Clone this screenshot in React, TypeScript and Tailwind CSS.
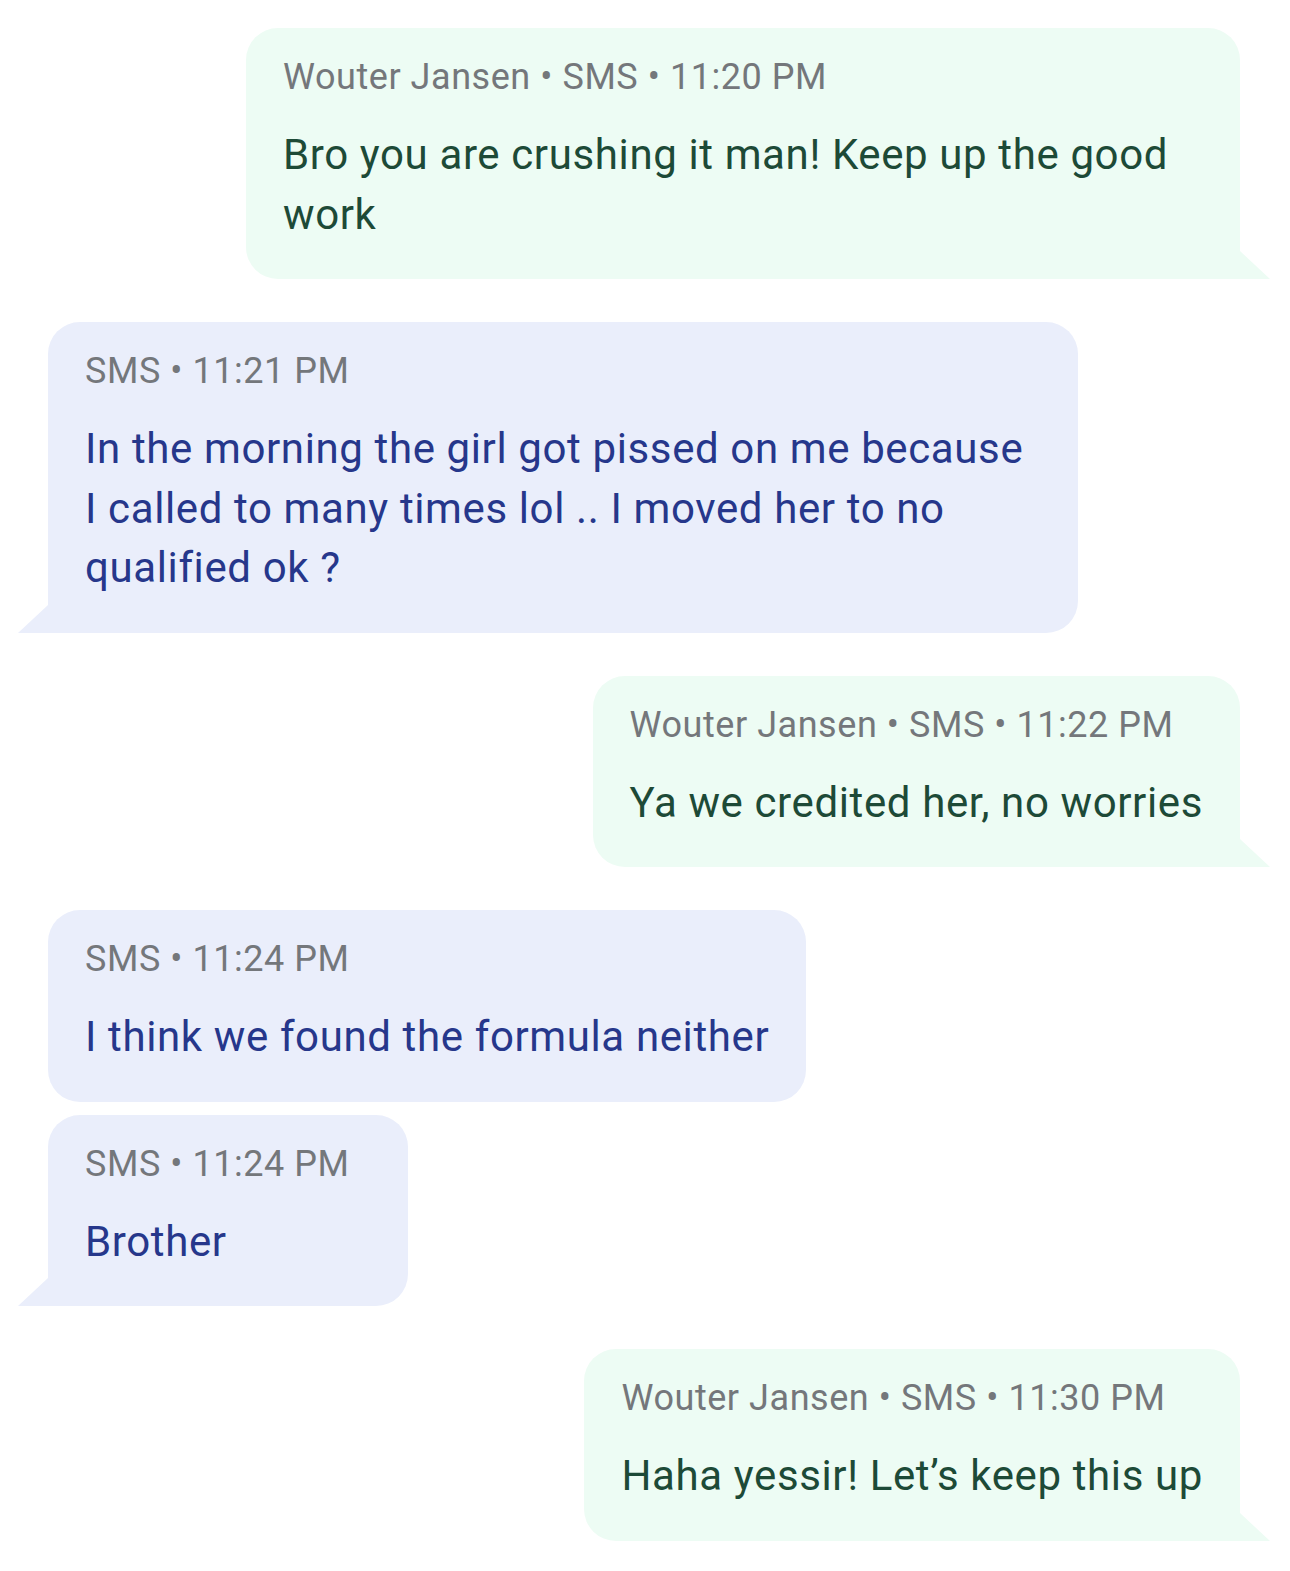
import React from 'react';

type Msg = {
    out: boolean;
    meta: string;
    text: string;
    maxW: string;
    tail: boolean;
    gap: string;
};

const messages: Msg[] = [
    { out: true, meta: 'Wouter Jansen • SMS • 11:20 PM', text: 'Bro you are crushing it man! Keep up the good work', maxW: 'max-w-[994px]', tail: true, gap: 'mt-0' },
    { out: false, meta: 'SMS • 11:21 PM', text: 'In the morning the girl got pissed on me because I called to many times lol .. I moved her to no qualified ok ?', maxW: 'max-w-[1030px]', tail: true, gap: 'mt-[43px]' },
    { out: true, meta: 'Wouter Jansen • SMS • 11:22 PM', text: 'Ya we credited her, no worries', maxW: 'max-w-[1030px]', tail: true, gap: 'mt-[43px]' },
    { out: false, meta: 'SMS • 11:24 PM', text: 'I think we found the formula neither', maxW: 'max-w-[1030px]', tail: false, gap: 'mt-[43px]' },
    { out: false, meta: 'SMS • 11:24 PM', text: 'Brother', maxW: 'max-w-[1030px]', tail: true, gap: 'mt-[13px]' },
    { out: true, meta: 'Wouter Jansen • SMS • 11:30 PM', text: 'Haha yessir! Let’s keep this up', maxW: 'max-w-[1030px]', tail: true, gap: 'mt-[43px]' },
];

const Bubble: React.FC<{ m: Msg }> = ({ m }) => {
    const corner = m.tail ? (m.out ? 'rounded-br-none' : 'rounded-bl-none') : '';
    return (
        <div className={`flex ${m.out ? 'justify-end' : 'justify-start'} ${m.gap}`}>
            <div className={`relative w-fit min-w-[360px] ${m.maxW} rounded-[32px] ${corner} ${m.out ? 'bg-[#edfcf4]' : 'bg-[#eaeefb]'} pl-[37px] pr-[37px] pt-[29px] pb-[35px]`}>
                <div className="text-[36px] leading-[40px] text-[#74777b] tracking-[0.55px] whitespace-nowrap">{m.meta}</div>
                <div className={`mt-[28px] text-[42px] leading-[59.5px] tracking-[0.62px] ${m.out ? 'text-[#1d4a37]' : 'text-[#26378b]'}`}>{m.text}</div>
                {m.tail && (
                    <svg
                        className={`absolute bottom-0 ${m.out ? 'right-[-30px]' : 'left-[-30px]'}`}
                        width="30"
                        height="28"
                        viewBox="0 0 30 28"
                    >
                        {m.out ? (
                            <polygon points="0,0 30,28 0,28" fill="#edfcf4" />
                        ) : (
                            <polygon points="30,0 0,28 30,28" fill="#eaeefb" />
                        )}
                    </svg>
                )}
            </div>
        </div>
    );
};

const App: React.FC = () => {
    return (
        <div className="min-h-screen w-full bg-white pt-[28px] pb-[35px] pl-[48px] pr-[50px]" style={{ fontFamily: 'Roboto, "Noto Sans", sans-serif' }}>
            {messages.map((m, i) => (
                <Bubble key={i} m={m} />
            ))}
        </div>
    );
};

export default App;
